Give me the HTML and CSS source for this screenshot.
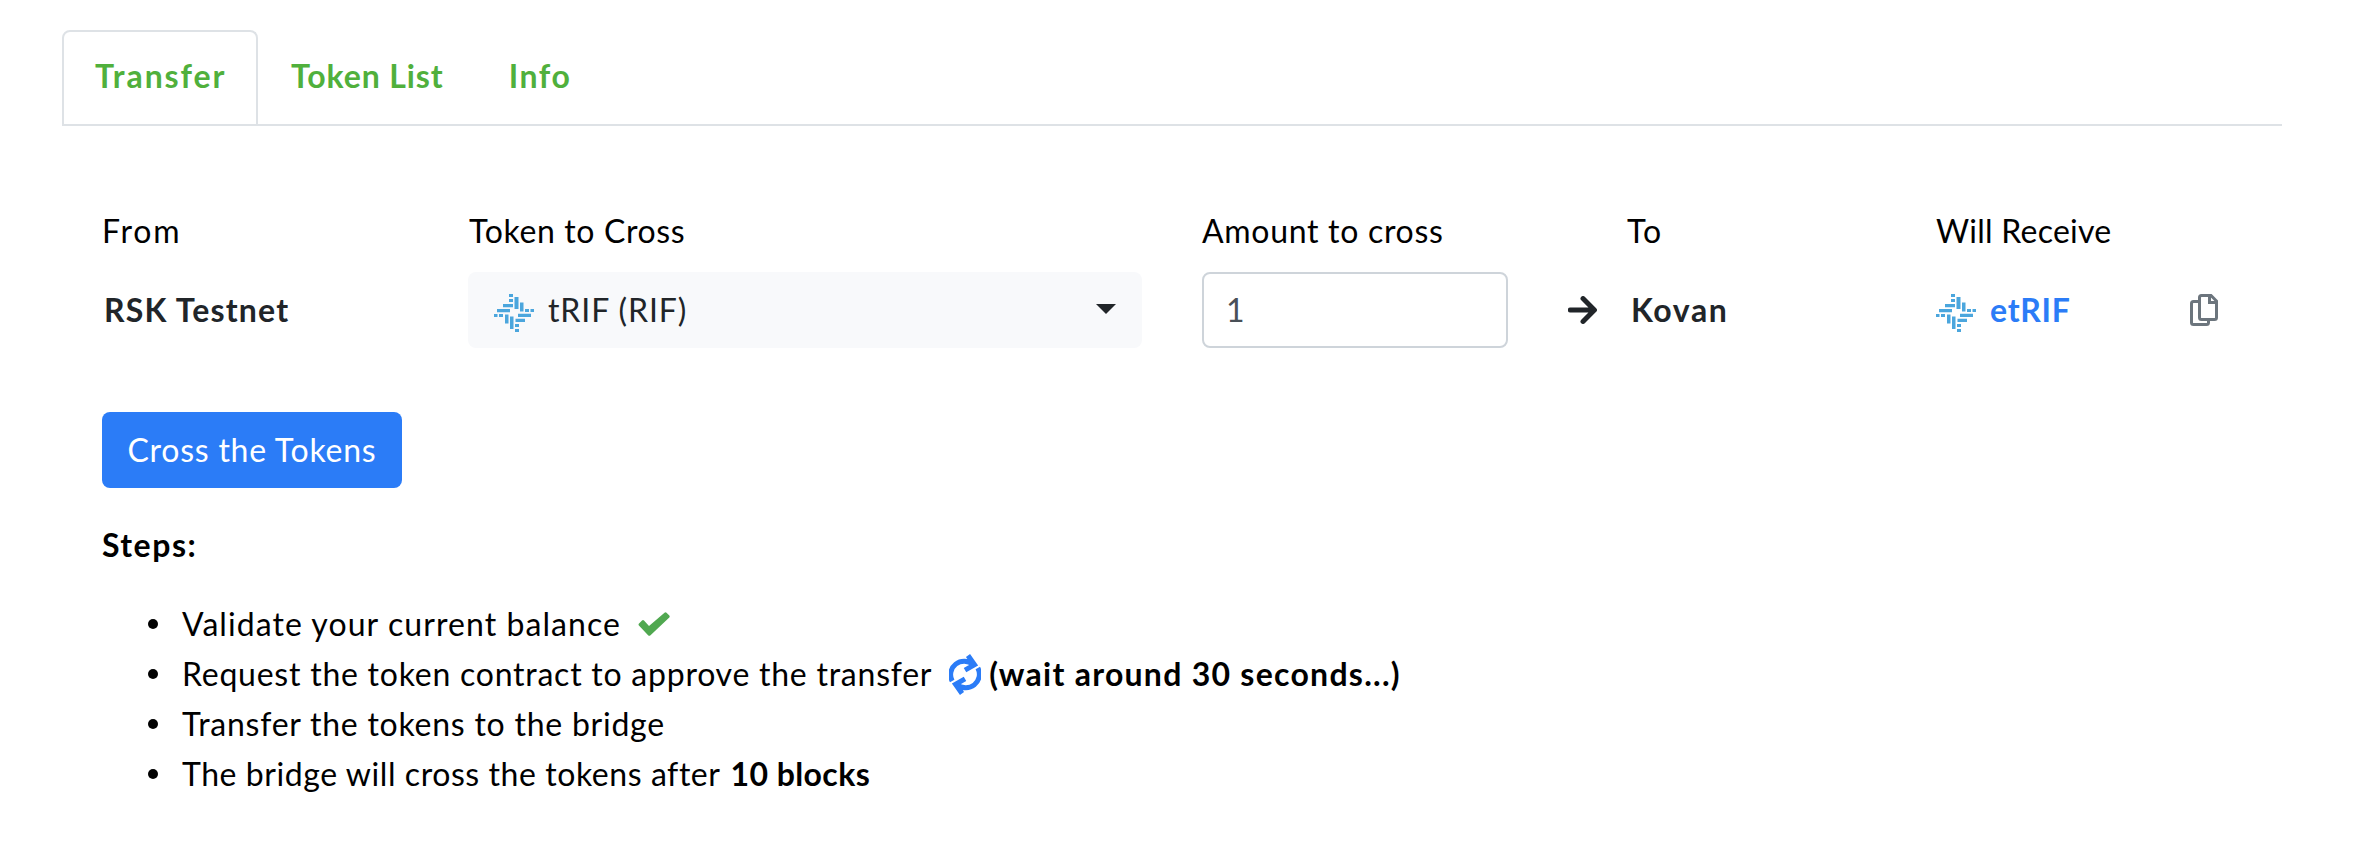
FILE: index.html
```html
<!DOCTYPE html>
<html lang="en">
<head>
<meta charset="utf-8">
<title>Token Bridge</title>
<link rel="stylesheet" href="styles.css">
</head>
<body>
<svg class="sprite" aria-hidden="true">
  <symbol id="rif" viewBox="0 0 40 38">
    <path d="M15 0h4v3h-4zM15 5h4v3h-4zM20.500 3h4v12h-4zM26 8.500h3.500v9H26zM31 15h4v3h-4zM36.500 15h3.500v3h-3.500zM9 10h10v3.200H9zM3 15h13v3.200H3zM0 20h3.500v3H0zM5 20h4v3H5zM11 20.500h3.500v9H11zM16 22.500h3.500v12.500H16zM24 19.800h13V23H24zM21.500 24.800H31V28h-9.500zM21 30h4v3h-4zM21 35h4v3h-4z"/>
  </symbol>
</svg>
<nav class="tabs">
  <a class="tab active"><span class="t-transfer">Transfer</span></a>
  <a class="tab"><span class="t-list">Token List</span></a>
  <a class="tab"><span class="t-info">Info</span></a>
</nav>
<main class="panel">
  <div class="form">
    <div class="field"><label><span class="l-from">From</span></label><div class="value network"><span class="v-rsk">RSK Testnet</span></div></div>
    <div class="field"><label><span class="l-token">Token to Cross</span></label>
      <div class="select"><svg class="rif"><use href="#rif"/></svg><span class="v-trif">tRIF (RIF)</span><i class="caret"></i></div></div>
    <div class="field"><label><span class="l-amount">Amount to cross</span></label><div class="input"><span>1</span></div></div>
    <div class="arrow"><svg viewBox="0 0 28 27"><path d="M2.200 13.500H25M14.500 2.500l11 11-11 11"/></svg></div>
    <div class="field"><label><span class="l-to">To</span></label><div class="value kovan"><span class="v-kovan">Kovan</span></div></div>
    <div class="field"><label><span class="l-receive">Will Receive</span></label>
      <div class="value receive"><svg class="rif"><use href="#rif"/></svg><span class="v-etrif">etRIF</span></div></div>
    <div class="copy"><svg viewBox="0 0 28 32"><path d="M9 7.500H3.500a2 2 0 0 0-2 2v19a2 2 0 0 0 2 2h13a2 2 0 0 0 2-2V26M11.500 1.500H21l5.500 5.500v16.500a2 2 0 0 1-2 2h-13a2 2 0 0 1-2-2v-20a2 2 0 0 1 2-2zM19.500 1.500v7h7"/></svg></div>
  </div>
  <button class="submit"><span class="b-cross">Cross the Tokens</span></button>
  <div class="steps-title"><span class="s-title">Steps:</span></div>
  <ul class="steps">
    <li><span class="s-validate">Validate your current balance</span><svg class="check" viewBox="0 0 32 24"><path d="M1 11.500l3-3q1-.8 2 0l5 5.500L26.500 .8q1-.9 2 0l2.800 2.700q.8 1 0 2L12.500 23.200q-1.200 1-2.400 0L.9 13.500q-.8-1 .1-2z"/></svg></li>
    <li><span class="s-request">Request the token contract to approve the transfer</span><svg class="sync" viewBox="0 0 32 43"><path d="M3.200 28A13.500 13.500 0 0 1 24 11.500M28.800 15A13.500 13.500 0 0 1 8 31.500M19 2.500l6.500 9.200-9.500 5.500M13 40.500L6.500 31.300l9.500-5.500"/></svg><b class="s-wait">(wait around 30 seconds...)</b></li>
    <li><span class="s-bridge">Transfer the tokens to the bridge</span></li>
    <li><span class="s-after">The bridge will cross the tokens after</span><b class="s-blocks">10 blocks</b></li>
  </ul>
</main>
</body>
</html>
```

FILE: styles.css
```css
* { box-sizing: border-box; }
body { margin: 0; padding: 30px 78px 0 62px; background: #fff; color: #000; font: 32px/50px Lato, sans-serif; }
.sprite { display: none; }

/* Tabs */
.tabs { display: flex; height: 96px; border-bottom: 2px solid #dee2e6; }
.tab { height: 94px; padding: 19px 30px 0 31px; border: 2px solid transparent; border-bottom: 0; color: #50b03c; font-weight: 700; }
.tab.active { border-color: #dee2e6; border-radius: 8px 8px 0 0; width: 196px; }
.tab span, .field span, .steps span, .steps b { white-space: nowrap; }
.t-transfer { letter-spacing: 1.9px; }
.t-list { letter-spacing: 0.9px; }
.t-info { letter-spacing: 1.6px; }

/* Transfer form */
.panel { padding: 80px 0 0 40px; }
.form { display: grid; grid-template-columns: 366px 734px 366px 58px 310px 254px 28px; height: 142px; color: #212529; }
label { display: block; height: 66px; line-height: 50px; color: #000; }
.value { display: flex; align-items: center; height: 76px; font-weight: 700; }
.network { padding-left: 2px; }
.kovan { padding-left: 5px; }
.l-from { letter-spacing: 1.8px; }
.l-token { margin-left: 1px; letter-spacing: 0.65px; }
.l-amount { letter-spacing: 0.7px; }
.l-to { margin-left: 1px; letter-spacing: 1px; }
.l-receive { letter-spacing: 0.25px; }
.v-rsk { letter-spacing: 1.2px; }
.v-trif { letter-spacing: 0.9px; }
.v-kovan { letter-spacing: 1.6px; }
.v-etrif { letter-spacing: 0.7px; }
.rif { width: 40px; height: 38px; margin: 5px 14px 0 0; fill: #4ba6dd; }
.receive { color: #2b7cf7; }
.select { display: flex; align-items: center; width: 674px; height: 76px; padding: 0 26px; border-radius: 8px; background: #f8f9fb; }
.caret { margin: -2px 0 0 auto; border: 10px solid transparent; border-top-color: #212529; border-bottom: 0; }
.input { width: 306px; height: 76px; padding: 11px 22px; border: 2px solid #ced4da; border-radius: 8px; color: #495057; }
.arrow { padding-top: 90px; }
.arrow svg { display: block; width: 29px; height: 28px; fill: none; stroke: #212529; stroke-width: 4.8; stroke-linecap: round; stroke-linejoin: round; }
.copy { padding-top: 88px; }
.copy svg { display: block; width: 28px; height: 32px; fill: none; stroke: #6c757d; stroke-width: 3; }
.submit { display: block; width: 300px; height: 76px; margin-top: 64px; padding: 0; border: 0; border-radius: 8px; background: #2b7cf7; color: #fff; font: 32px/50px Lato, sans-serif; }
.b-cross { letter-spacing: 0.75px; }

/* Progress steps */
.steps-title { margin-top: 32px; font-weight: 700; }
.s-title { letter-spacing: 1.5px; }
.steps { margin: 29px 0 0; padding: 0; list-style: none; }
.steps li { display: flex; align-items: center; height: 50px; padding-left: 46px; }
.steps li::before { content: ""; width: 10px; height: 10px; margin-right: 24px; border-radius: 50%; background: #000; }
.s-validate { letter-spacing: 1.07px; }
.s-request { letter-spacing: 0.76px; }
.s-wait { letter-spacing: 1.27px; }
.s-bridge { letter-spacing: 0.76px; }
.s-after { letter-spacing: 0.57px; }
.s-blocks { margin-left: 10px; letter-spacing: 0.4px; }
.check { width: 32px; height: 24px; margin-left: 17px; fill: #50a850; }
.sync { width: 32px; height: 43px; margin: 0 8px 0 17px; fill: none; stroke: #2b7cf7; stroke-width: 5; }
```
